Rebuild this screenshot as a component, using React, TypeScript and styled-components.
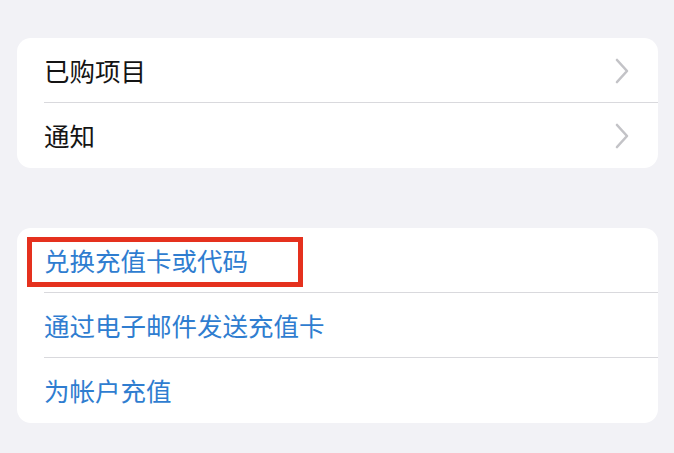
import React from "react";
import styled, {createGlobalStyle} from "styled-components";

interface IRow {
    label: string,
    link?: boolean,
    chevron?: boolean,
    marked?: boolean
}

const GlobalStyle = createGlobalStyle`
    html, body {
        margin: 0;
        padding: 0;
        background: #f2f2f6;
    }
    body {
        font-family: "Noto Sans CJK SC", "Noto Sans", sans-serif;
    }
`,

    Page = styled.div`
        width: 674px;
        height: 453px;
        box-sizing: border-box;
        padding: 38px 16px 0 17px;
        display: flex;
        flex-direction: column;
        gap: 60px;
        background: #f2f2f6;
        overflow: hidden;
`,

    Card = styled.div`
        background: #ffffff;
        border-radius: 14px;
        display: flex;
        flex-direction: column;
`,

    Row = styled.div`
        position: relative;
        height: 65px;
        display: flex;
        align-items: center;
        padding-left: 27px;
        padding-right: 29px;
        &:not(:last-child)::after {
            content: "";
            position: absolute;
            left: 27px;
            right: 0;
            bottom: 0;
            height: 1px;
            background: #d9d9dd;
        }
`,

    Label = styled.span<{$link?: boolean}>`
        flex: 1;
        font-size: 25.5px;
        line-height: 1;
        color: ${(p) => (p.$link ? "#2f7dd0" : "#141414")};
        margin-top: -2px;
`,

    Marker = styled.div`
        position: absolute;
        left: 10px;
        top: 9px;
        width: 276px;
        height: 50px;
        box-sizing: border-box;
        border: 5px solid #e5311e;
        pointer-events: none;
`,

    Chevron = styled.svg`
        width: 14px;
        height: 26px;
        flex: none;
`;

const groups: IRow[][] = [
    [
        {label: "已购项目", chevron: true},
        {label: "通知", chevron: true}
    ],
    [
        {label: "兑换充值卡或代码", link: true, marked: true},
        {label: "通过电子邮件发送充值卡", link: true},
        {label: "为帐户充值", link: true}
    ]
];

function ChevronIcon () {

    return (
        <Chevron viewBox="0 0 14 26">
            <path d="M2 2 L12 13 L2 24" fill="none" stroke="#c3c3c7" strokeWidth="2.6" strokeLinecap="round" strokeLinejoin="round" />
        </Chevron>
    );

}

export default function App () {

    return (
        <>
            <GlobalStyle />
            <Page>
                {groups.map((rows, gi) => (
                    <Card key={gi}>
                        {rows.map((row) => (
                            <Row key={row.label}>
                                <Label $link={row.link}>
                                    {row.label}
                                </Label>
                                {row.chevron && <ChevronIcon />}
                                {row.marked && <Marker />}
                            </Row>
                        ))}
                    </Card>
                ))}
            </Page>
        </>
    );

}
